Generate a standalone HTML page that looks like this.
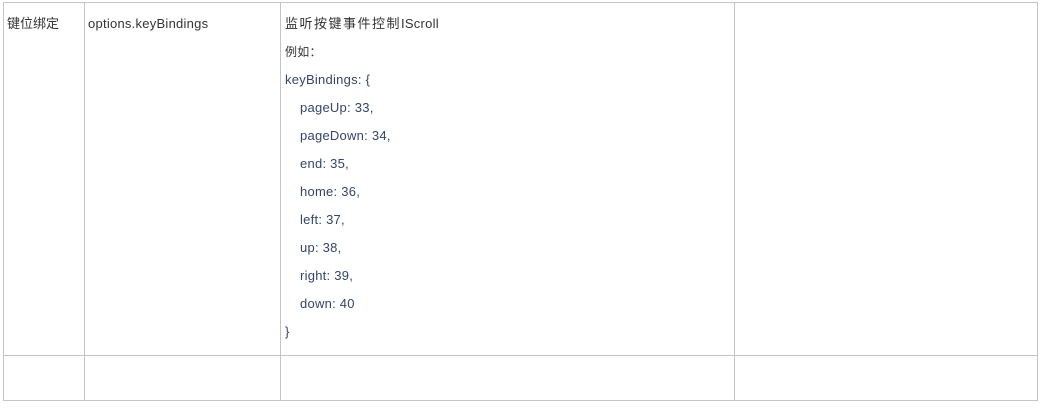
<!DOCTYPE html>
<html><head><meta charset="utf-8"><style>
body{margin:0;background:#fff;font-family:"Liberation Sans","Noto Sans CJK SC",sans-serif;font-size:13px;color:#333}
.l{position:absolute;background:#c4c4c4}
.t{position:absolute;white-space:nowrap;line-height:16px;letter-spacing:0.25px}
.c{color:#34456a}
.k{letter-spacing:1.5px}
</style></head><body>
<div class="l" style="left:3px;top:2px;width:1035px;height:1px"></div>
<div class="l" style="left:3px;top:355px;width:1035px;height:1px"></div>
<div class="l" style="left:3px;top:400px;width:1035px;height:1px"></div>
<div class="l" style="left:3px;top:2px;width:1px;height:399px"></div>
<div class="l" style="left:84px;top:2px;width:1px;height:399px"></div>
<div class="l" style="left:280px;top:2px;width:1px;height:399px"></div>
<div class="l" style="left:734px;top:2px;width:1px;height:399px"></div>
<div class="l" style="left:1037px;top:2px;width:1px;height:399px"></div>
<div class="t" style="left:7px;top:16px;letter-spacing:0">键位绑定</div>
<div class="t" style="left:88px;top:16px">options.keyBindings</div>
<div class="t" style="left:285px;top:16px"><span class="k">监听按键事件控制</span>IScroll</div>
<div class="t" style="left:285px;top:44px;font-size:12px">例如：</div>
<div class="t c" style="left:285px;top:72px">keyBindings: {</div>
<div class="t c" style="left:300px;top:100px">pageUp: 33,</div>
<div class="t c" style="left:300px;top:128px">pageDown: 34,</div>
<div class="t c" style="left:300px;top:156px">end: 35,</div>
<div class="t c" style="left:300px;top:184px">home: 36,</div>
<div class="t c" style="left:300px;top:212px">left: 37,</div>
<div class="t c" style="left:300px;top:240px">up: 38,</div>
<div class="t c" style="left:300px;top:268px">right: 39,</div>
<div class="t c" style="left:300px;top:296px">down: 40</div>
<div class="t c" style="left:285px;top:324px">}</div>
</body></html>
